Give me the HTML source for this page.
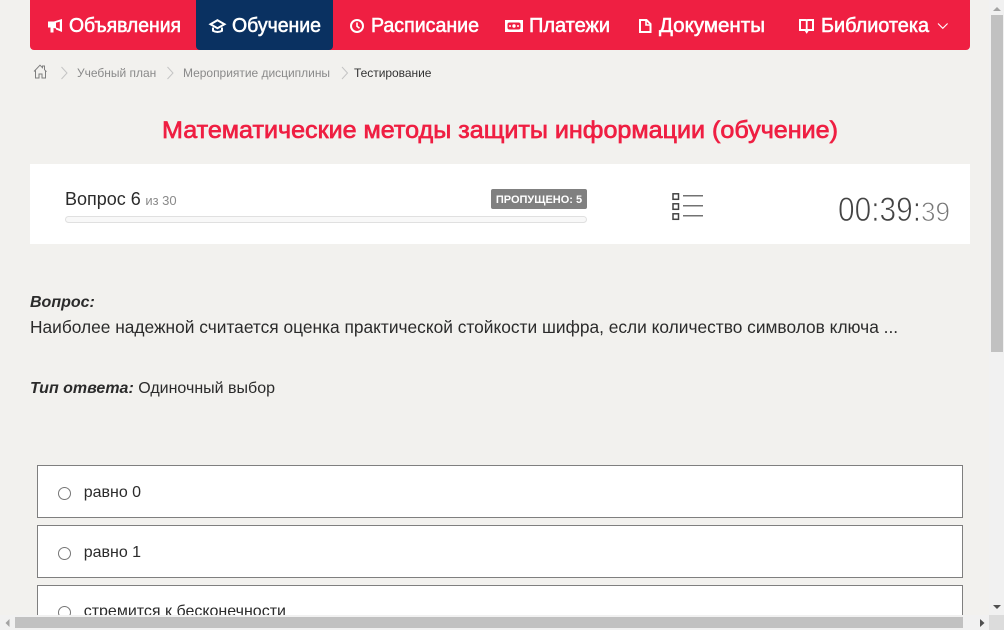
<!DOCTYPE html>
<html lang="ru"><head><meta charset="utf-8"><title>Тестирование</title>
<style>
html,body{margin:0;padding:0;width:1004px;height:630px;overflow:hidden;background:#f2f1ee}
body{position:relative;font-family:"Liberation Sans",sans-serif;color:#2b2b2b}
.a{position:absolute;white-space:nowrap}
.opt{position:absolute;left:37px;width:924px;height:51px;background:#fff;border:1px solid #7f7f7f}
.radio{position:absolute;left:58px;width:11px;height:11px;border:1px solid #767676;border-radius:50%;background:#fff}
.ot{position:absolute;left:83.700px;font-size:16px;line-height:18px;color:#2b2b2b;white-space:nowrap}
svg{position:absolute;left:0;top:0;overflow:visible}
</style></head><body>

<div class="a" style="left:30px;top:0;width:940px;height:50px;background:#ef1f42;border-radius:0 0 4px 4px"></div>
<div class="a" style="left:196px;top:0;width:137px;height:50px;background:#0a3161;border-radius:0 0 4px 4px"></div>

<svg width="1004" height="630" viewBox="0 0 1004 630">
<g font-family="Liberation Sans" font-size="20" fill="#fff" stroke="#fff" stroke-width=".55">
<text x="69" y="32" textLength="112" lengthAdjust="spacingAndGlyphs">Объявления</text>
<text x="232" y="32" textLength="89" lengthAdjust="spacingAndGlyphs">Обучение</text>
<text x="371" y="32" textLength="108" lengthAdjust="spacingAndGlyphs">Расписание</text>
<text x="529" y="32" textLength="81" lengthAdjust="spacingAndGlyphs">Платежи</text>
<text x="659" y="32" textLength="106" lengthAdjust="spacingAndGlyphs">Документы</text>
<text x="821" y="32" textLength="108" lengthAdjust="spacingAndGlyphs">Библиотека</text>
</g>
<!-- megaphone -->
<path d="M48 21.500h6l8-2.500v13l-6-2.500v-1l-2.500-.5v4.500h-3v-5h-2.500z" fill="#fff"/>
<path d="M56 22.700l3.800-1.100v7.300l-3.800-1.400z" fill="#ef1f42"/>
<!-- grad cap -->
<path d="M217.500 20.200l7 4-7 4-7-4z" fill="none" stroke="#fff" stroke-width="2"/>
<path d="M213 27.500v3.300q4.500 2.500 9 0v-3.300" fill="none" stroke="#fff" stroke-width="2"/>
<!-- clock -->
<circle cx="357" cy="26" r="6" fill="none" stroke="#fff" stroke-width="2"/>
<path d="M357 22.500v3.700l2.500 2" fill="none" stroke="#fff" stroke-width="1.600"/>
<!-- money -->
<rect x="505" y="20" width="18" height="12" fill="#fff"/>
<rect x="507.500" y="22.500" width="13" height="7" rx="2" fill="#ef1f42"/>
<circle cx="514" cy="26" r="1.700" fill="#fff"/><circle cx="510" cy="26" r="1" fill="#fff"/><circle cx="518" cy="26" r="1" fill="#fff"/>
<!-- document -->
<path d="M640 20h6.500l4 4v8h-10.500z" fill="none" stroke="#fff" stroke-width="2"/>
<path d="M646 20v5h5" fill="none" stroke="#fff" stroke-width="1.600"/>
<!-- book -->
<path d="M800 20h5.500q1.200 0 1.200 1.200q0-1.200 1.200-1.200h5.100v10h-5l-1.300 2-1.300-2h-5.400z" fill="none" stroke="#fff" stroke-width="2"/>
<path d="M806.700 21v9" stroke="#fff" stroke-width="1.800"/>
<!-- chevron -->
<path d="M938 23.500l4.800 4.800 4.800-4.800" fill="none" stroke="#fff" stroke-width="1.100"/>

<!-- breadcrumbs -->
<path d="M34 71.500l6-6.300 2.500 2.500v-1.700h2v3.700l2 2M35.500 70.500v7.500h3.500v-4h3v4h3.500v-7.500" fill="none" stroke="#7e7e7e" stroke-width="1"/>
<g fill="none" stroke="#c4c4c4" stroke-width="1">
<path d="M61.500 67l5.500 6-5.500 6"/>
<path d="M167.500 67l5.500 6-5.500 6"/>
<path d="M342 67l5.500 6-5.500 6"/>
</g>

<!-- title -->
<text x="162" y="138" font-family="Liberation Sans" font-size="24" fill="#ef1f42" stroke="#ef1f42" stroke-width=".7" textLength="676" lengthAdjust="spacingAndGlyphs">Математические методы защиты информации (обучение)</text>
</svg>

<div class="a" style="left:77px;top:66px;font-size:12px;line-height:14px;color:#8a8a8a;letter-spacing:-.01px">Учебный план</div>
<div class="a" style="left:183px;top:66px;font-size:12px;line-height:14px;color:#8a8a8a;letter-spacing:-.02px">Мероприятие дисциплины</div>
<div class="a" style="left:354px;top:66px;font-size:12px;line-height:14px;color:#333;letter-spacing:-.03px">Тестирование</div>

<!-- progress panel -->
<div class="a" style="left:30px;top:164px;width:940px;height:80px;background:#fff"></div>
<div class="a" style="left:65px;top:188px;font-size:18px;line-height:22px;color:#2b2b2b">Вопрос 6 <span style="font-size:13px;color:#8a8a8a;margin-left:-.5px">из 30</span></div>
<div class="a" style="left:65px;top:216px;width:520px;height:5px;background:#f8f8f8;border:1px solid #e0e0e0;border-radius:4px"></div>
<div class="a" style="left:491px;top:189px;width:96px;height:20px;background:#808080;border-radius:2px;color:#fff;font-size:11px;font-weight:700;line-height:22px;text-align:center">ПРОПУЩЕНО: 5</div>

<svg width="1004" height="630" viewBox="0 0 1004 630">
<g fill="none" stroke="#444" stroke-width="1.500">
<rect x="673" y="193.800" width="5.500" height="5.500"/>
<rect x="673" y="203.800" width="5.500" height="5.500"/>
<rect x="673" y="213.800" width="5.500" height="5.500"/>
</g>
<g stroke="#444" stroke-width="1.200">
<path d="M683 195.800h20M683 205.800h20M683 215.800h20"/>
</g>
<g font-family="Liberation Sans" stroke="#fff" stroke-width=".8">
<text x="838" y="221" font-size="34" fill="#444" textLength="83" lengthAdjust="spacingAndGlyphs">00:39:</text>
<text x="921" y="221" font-size="27" fill="#777" textLength="29" lengthAdjust="spacingAndGlyphs">39</text>
</g>
</svg>

<!-- question -->
<div class="a" style="left:30px;top:293px;font-size:16px;line-height:20px;font-weight:700;font-style:italic;color:#2b2b2b">Вопрос:</div>
<div class="a" style="left:30px;top:317px;font-size:17.340px;line-height:20px;color:#2b2b2b">Наиболее надежной считается оценка практической стойкости шифра, если количество символов ключа ...</div>
<div class="a" style="left:30px;top:379px;font-size:16px;line-height:20px;color:#2b2b2b"><b><i>Тип ответа:</i></b> Одиночный выбор</div>

<!-- options -->
<div class="opt" style="top:465px"></div>
<div class="radio" style="top:487px"></div>
<div class="ot" style="top:484px">равно 0</div>
<div class="opt" style="top:525px"></div>
<div class="radio" style="top:547px"></div>
<div class="ot" style="top:544px">равно 1</div>
<div class="opt" style="top:585px"></div>
<div class="radio" style="top:606px"></div>
<div class="ot" style="top:603px">стремится к бесконечности</div>

<!-- scrollbars -->
<div class="a" style="left:989px;top:0;width:15px;height:615px;background:#f1f1f1"></div>
<div class="a" style="left:991px;top:15px;width:12px;height:337px;background:#c1c1c1"></div>
<div class="a" style="left:0;top:615px;width:989px;height:15px;background:#f1f1f1"></div>
<div class="a" style="left:15px;top:617px;width:948px;height:11px;background:#c1c1c1"></div>
<div class="a" style="left:989px;top:615px;width:15px;height:15px;background:#dcdcdc"></div>
<svg width="1004" height="630" viewBox="0 0 1004 630">
<g fill="#a3a3a3">
<path d="M993 11h8l-4-4z"/>
<path d="M9.500 619v8l-4-4z"/>
</g>
<g fill="#505050">
<path d="M993 605h8l-4 4z"/>
<path d="M980 619v8l4.500-4z"/>
</g>
</svg>
</body></html>
